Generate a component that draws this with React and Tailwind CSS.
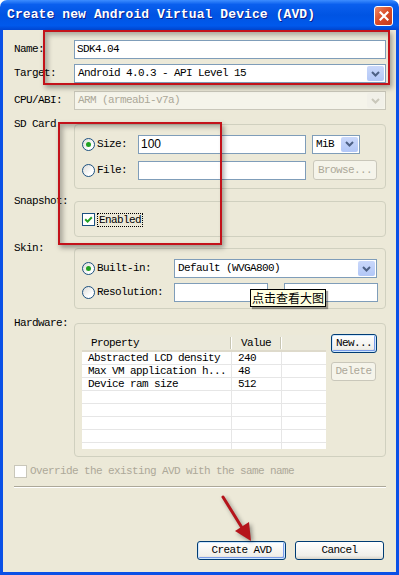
import React from "react";

// XP-style "Create new Android Virtual Device" dialog, with the red markup on top

function Radio({ checked }) {
  return (
    <span className="flex h-[13px] w-[13px] shrink-0 items-center justify-center rounded-full border border-[#1C5180] bg-[linear-gradient(135deg,#DCDCD7,#FFFFFF_70%)]">
      {checked && <span className="h-[5px] w-[5px] rounded-full bg-[#21A121]" />}
    </span>
  );
}

function Chevron({ disabled }) {
  return (
    <span
      className={
        disabled
          ? "flex h-full w-[17px] shrink-0 items-center justify-center rounded-[2px] bg-[#F1F0E8]"
          : "flex h-full w-[17px] shrink-0 items-center justify-center rounded-[2px] bg-[linear-gradient(180deg,#CAD8FA,#B2C7F7)]"
      }
    >
      <svg viewBox="0 0 9 6" className="h-[6px] w-[9px]">
        <path
          d="M1 1 L4.5 4.5 L8 1"
          stroke={disabled ? "#C9C7BA" : "#4D6185"}
          strokeWidth="2"
          fill="none"
        />
      </svg>
    </span>
  );
}

function Combo({ value, disabled, className }) {
  return (
    <div
      className={
        (disabled
          ? "flex h-[19px] border border-[#C9C7BA] bg-[#F5F4EA] p-[1px] text-[#ACA899] "
          : "flex h-[19px] border border-[#7F9DB9] bg-white p-[1px] ") + className
      }
    >
      <span className="flex flex-1 items-center pl-[2px] whitespace-nowrap">{value}</span>
      <Chevron disabled={disabled} />
    </div>
  );
}

function Field({ value, className }) {
  return (
    <div className={"flex h-[19px] items-center border border-[#7F9DB9] bg-white px-[2px] " + className}>
      {value}
    </div>
  );
}

function XpButton({ children, disabled, focused, className }) {
  if (disabled) {
    return (
      <div className={"flex items-center justify-center rounded-[3px] border border-[#C9C7BA] bg-[#F5F4EA] text-[#ACA899] " + className}>
        {children}
      </div>
    );
  }
  return (
    <div
      className={
        "flex items-center justify-center rounded-[3px] border border-[#003C74] bg-[linear-gradient(180deg,#FFFFFF,#F0EFEA_80%,#D8D4CA)] " +
        (focused ? "shadow-[inset_0_0_0_1px_#CEE7FF,inset_-1px_-1px_0_1px_#7B9CE8] " : "") +
        className
      }
    >
      {children}
    </div>
  );
}

function Group({ label, className, children }) {
  return (
    <div className={"flex " + className}>
      <div className="-mt-[6px] w-[60px] shrink-0 leading-[12px]">{label}</div>
      <div className="flex-1 rounded-[4px] border border-[#D0D0BF]">{children}</div>
    </div>
  );
}

const rows = [
  ["Abstracted LCD density", "240"],
  ["Max VM application h...", "48"],
  ["Device ram size", "512"],
  ["", ""],
  ["", ""],
  ["", ""],
  ["", ""],
  ["", ""],
];

export default function App() {
  return (
    <div className="relative flex h-[575px] w-[399px] flex-col overflow-hidden bg-white font-['Liberation_Mono',monospace] text-[11px] tracking-[-0.6px] text-black">
      <div className="flex h-[30px] shrink-0 items-center justify-between rounded-t-[7px] bg-[linear-gradient(180deg,#3D8DFF_0%,#0A5FEE_15%,#0054E3_50%,#0059EC_85%,#0046D2_100%)] pl-[7px] pr-[6px]">
        <span className="font-['Liberation_Mono',monospace] text-[13px] font-bold tracking-[0.1px] text-white [text-shadow:1px_1px_0_#0A1E8C]">
          Create new Android Virtual Device (AVD)
        </span>
        <span className="mt-[2px] flex h-[20px] w-[19px] items-center justify-center rounded-[3px] border border-white bg-[linear-gradient(135deg,#EE8A66,#D94A26_50%,#C23A1C)]">
          <svg viewBox="0 0 10 10" className="h-[10px] w-[10px]">
            <path d="M1.5 1.5 L8.5 8.5 M8.5 1.5 L1.5 8.5" stroke="white" strokeWidth="2.2" strokeLinecap="square" />
          </svg>
        </span>
      </div>

      <div className="flex flex-1 bg-[#0A50E6] px-[3px] pb-[3px]">
        <div className="flex flex-1 flex-col bg-[#ECE9D8] pl-[11px] pr-[10px] pt-[10px]">
          <div className="flex h-[19px] items-center">
            <span className="w-[60px] shrink-0">Name:</span>
            <Field value="SDK4.04" className="flex-1" />
          </div>
          <div className="mt-[5px] flex h-[19px] items-center">
            <span className="w-[60px] shrink-0">Target:</span>
            <Combo value="Android 4.0.3 - API Level 15" className="flex-1" />
          </div>
          <div className="mt-[8px] flex h-[19px] items-center">
            <span className="w-[60px] shrink-0">CPU/ABI:</span>
            <Combo value="ARM (armeabi-v7a)" disabled className="flex-1" />
          </div>

          <Group label="SD Card" className="mt-[14px]">
            <div className="flex flex-col gap-[6px] pb-[8px] pl-[7px] pt-[9px]">
              <div className="flex h-[20px] items-center">
                <div className="flex w-[56px] items-center gap-[2px]">
                  <Radio checked />
                  <span>Size:</span>
                </div>
                <Field value="100" className="h-[18px] w-[168px] font-['Liberation_Sans',sans-serif] text-[12px] tracking-normal" />
                <Combo value="MiB" className="ml-[6px] w-[48px]" />
              </div>
              <div className="flex h-[20px] items-center">
                <div className="flex w-[56px] items-center gap-[2px]">
                  <Radio />
                  <span>File:</span>
                </div>
                <Field value="" className="h-[18px] w-[168px]" />
                <XpButton disabled className="ml-[7px] h-[20px] w-[64px]">Browse...</XpButton>
              </div>
            </div>
          </Group>

          <Group label="Snapshot:" className="mt-[12px]">
            <div className="mb-[9px] mt-[10px] flex h-[15px] items-center gap-[2px] pl-[7px]">
              <span className="flex h-[13px] w-[13px] items-center justify-center border border-[#1C5180] bg-white">
                <svg viewBox="0 0 11 11" className="h-[11px] w-[11px]">
                  <path d="M2.2 5.2 L4.6 7.6 L8.8 3.2" stroke="#21A121" strokeWidth="2" fill="none" />
                </svg>
              </span>
              <span className="border border-dotted border-black px-[1px] leading-[12px]">Enabled</span>
            </div>
          </Group>

          <Group label="Skin:" className="mt-[11px]">
            <div className="flex flex-col gap-[5px] pb-[6px] pl-[7px] pt-[10px]">
              <div className="flex h-[19px] items-center">
                <div className="flex w-[92px] items-center gap-[2px]">
                  <Radio checked />
                  <span>Built-in:</span>
                </div>
                <Combo value="Default (WVGA800)" className="w-[203px]" />
              </div>
              <div className="flex h-[19px] items-center">
                <div className="flex w-[92px] items-center gap-[2px]">
                  <Radio />
                  <span>Resolution:</span>
                </div>
                <Field value="" className="w-[94px]" />
                <Field value="" className="ml-[16px] w-[94px]" />
              </div>
            </div>
          </Group>

          <Group label="Hardware:" className="mt-[14px]">
            <div className="flex gap-[5px] pb-[7px] pl-[7px] pt-[11px]">
              <div className="w-[244px]">
                <div className="grid h-[17px] grid-cols-[150px_50px_44px] bg-[#EBE9DA] shadow-[inset_0_-2px_0_#DEDACB]">
                  <div className="flex items-center justify-between pl-[9px]">
                    <span>Property</span>
                    <span className="mb-[2px] h-[12px] w-[2px] border-l border-[#C7C5B2] bg-white" />
                  </div>
                  <div className="flex items-center justify-between pl-[9px]">
                    <span>Value</span>
                    <span className="mb-[2px] h-[12px] w-[2px] border-l border-[#C7C5B2] bg-white" />
                  </div>
                  <div />
                </div>
                <div className="h-[97px] overflow-hidden bg-white">
                  {rows.map((r, i) => (
                    <div key={i} className="grid h-[13px] grid-cols-[150px_50px_44px] border-b border-[#E6E6E6] leading-[12px]">
                      <span className="border-r border-[#E6E6E6] pl-[6px] whitespace-nowrap">{r[0]}</span>
                      <span className="border-r border-[#E6E6E6] pl-[6px]">{r[1]}</span>
                      <span />
                    </div>
                  ))}
                </div>
              </div>
              <div className="-mt-[1px] flex flex-col gap-[9px]">
                <XpButton focused className="h-[19px] w-[46px]">New...</XpButton>
                <XpButton disabled className="h-[19px] w-[45px]">Delete</XpButton>
              </div>
            </div>
          </Group>

          <div className="mt-[8px] flex h-[13px] items-center gap-[3px] text-[#ACA899]">
            <span className="h-[13px] w-[13px] border border-[#C9C7BA] bg-white" />
            <span>Override the existing AVD with the same name</span>
          </div>

          <div className="mt-[8px] h-[2px] border-t border-[#ACA899] bg-white" />

          <div className="mt-[53px] flex justify-end gap-[9px] pr-[2px]">
            <XpButton focused className="h-[19px] w-[89px]">Create AVD</XpButton>
            <XpButton className="h-[19px] w-[89px]">Cancel</XpButton>
          </div>
        </div>
      </div>

      {/* red markup drawn over the dialog */}
      <div className="absolute left-[43px] top-[30px] h-[55px] w-[347px] border-2 border-[#C3121A] shadow-[inset_3px_3px_5px_rgba(0,0,0,0.28),2px_3px_5px_rgba(0,0,0,0.35)]" />
      <div className="absolute left-[58px] top-[122px] h-[123px] w-[164px] border-2 border-[#C3121A] shadow-[inset_3px_3px_5px_rgba(0,0,0,0.28),2px_3px_5px_rgba(0,0,0,0.35)]" />
      <svg className="absolute left-0 top-0 h-[575px] w-[399px] [filter:drop-shadow(2px_2px_2px_rgba(0,0,0,0.4))]" viewBox="0 0 399 575">
        <path d="M223 497 L244 531" stroke="#B5141B" strokeWidth="3" strokeLinecap="round" />
        <path d="M251 541 L235 531 L249 522 Z" fill="#B5141B" />
      </svg>

      <div className="absolute left-[250px] top-[289px] flex h-[18px] w-[76px] items-center justify-center border border-black bg-[#FFFFE1] font-['Noto_Sans_CJK_SC',sans-serif] text-[12px] leading-none tracking-normal shadow-[2px_2px_1px_rgba(0,0,0,0.35)]">
        点击查看大图
      </div>
    </div>
  );
}
